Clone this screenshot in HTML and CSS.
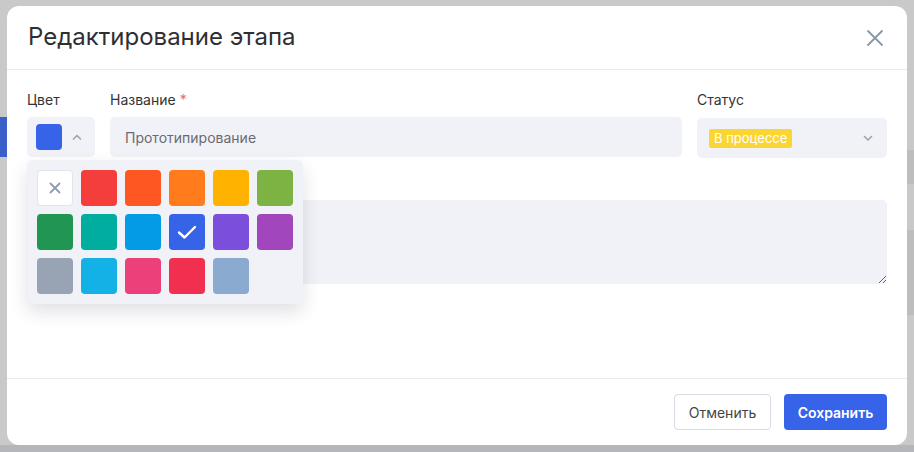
FILE: index.html
```html
<!DOCTYPE html>
<html lang="ru">

<head>
  <meta charset="UTF-8" />
  <meta name="viewport" content="width=device-width, initial-scale=1.0" />
  <title>Редактирование этапа</title>
  <link rel="stylesheet" href="styles.css">
</head>

<body>
  <div class="modal">
    <div class="modal-header">
      <h2>Редактирование этапа</h2>
      <button class="close" aria-label="Закрыть">
        <svg width="18" height="18" viewBox="0 0 18 18"><path d="M2 2 L16 16 M16 2 L2 16" stroke="#8a97a8" stroke-width="1.8" stroke-linecap="round" fill="none"/></svg>
      </button>
    </div>

    <div class="modal-body">
      <div class="row">
        <div class="field field-color">
          <label>Цвет</label>
          <div class="color-btn">
            <span class="color-current"></span>
            <svg width="10" height="6" viewBox="0 0 10 6"><path d="M1.5 5 L5 1.5 L8.5 5" stroke="#9aa4b2" stroke-width="1.6" fill="none" stroke-linecap="round" stroke-linejoin="round"/></svg>
          </div>

          <div class="palette">
            <span class="swatch none">
              <svg width="12" height="12" viewBox="0 0 12 12"><path d="M1.5 1.5 L10.5 10.5 M10.5 1.5 L1.5 10.5" stroke="#8f9bb0" stroke-width="1.8" stroke-linecap="round"/></svg>
            </span>
            <span class="swatch" style="background:#f43e3b"></span>
            <span class="swatch" style="background:#ff5722"></span>
            <span class="swatch" style="background:#ff7b1c"></span>
            <span class="swatch" style="background:#ffb300"></span>
            <span class="swatch" style="background:#7cb342"></span>
            <span class="swatch" style="background:#219653"></span>
            <span class="swatch" style="background:#00ad9f"></span>
            <span class="swatch" style="background:#039be5"></span>
            <span class="swatch selected" style="background:#3763e8">
              <svg width="20" height="16" viewBox="0 0 20 16"><path d="M2 8.5 L7.5 13.5 L18 3" stroke="#fff" stroke-width="2.4" fill="none" stroke-linecap="round" stroke-linejoin="round"/></svg>
            </span>
            <span class="swatch" style="background:#7b4fdc"></span>
            <span class="swatch" style="background:#a246be"></span>
            <span class="swatch" style="background:#98a4b3"></span>
            <span class="swatch" style="background:#13b1e6"></span>
            <span class="swatch" style="background:#ec407a"></span>
            <span class="swatch" style="background:#f0304e"></span>
            <span class="swatch" style="background:#8aabcf"></span>
          </div>
        </div>

        <div class="field field-name">
          <label>Название <span class="req">*</span></label>
          <input type="text" placeholder="Прототипирование">
        </div>

        <div class="field field-status">
          <label>Статус</label>
          <div class="select">
            <span class="badge">В процессе</span>
            <svg width="10" height="6" viewBox="0 0 10 6"><path d="M1.5 1.5 L5 5 L8.5 1.5" stroke="#9aa4b2" stroke-width="1.6" fill="none" stroke-linecap="round" stroke-linejoin="round"/></svg>
          </div>
        </div>
      </div>

      <div class="field field-desc">
        <label>Описание</label>
        <textarea></textarea>
      </div>
    </div>

    <div class="modal-footer">
      <button class="btn btn-cancel">Отменить</button>
      <button class="btn btn-save">Сохранить</button>
    </div>
  </div>
</body>

</html>
```

FILE: styles.css
```css
* {
  box-sizing: border-box;
}

body {
  margin: 0;
  height: 452px;
  overflow: hidden;
  font-family: Inter, "Noto Sans", sans-serif;
  background:
    linear-gradient(#3a5fc8, #3a5fc8) 0 117px / 7px 40px no-repeat,
    linear-gradient(#bdbdbd, #bdbdbd) 907px 150px / 7px 34px no-repeat,
    linear-gradient(#bdbdbd, #bdbdbd) 907px 230px / 7px 85px no-repeat,
    linear-gradient(#b4b6bc, #b4b6bc) 0 445px / 914px 7px no-repeat,
    #c9c9c9;
  padding: 6px 7px;
}

.modal {
  width: 900px;
  height: 439px;
  background: #fff;
  border-radius: 12px;
  display: flex;
  flex-direction: column;
}

.modal-header {
  height: 64px;
  padding: 0 22px 0 21px;
  display: flex;
  align-items: center;
  justify-content: space-between;
  border-bottom: 1px solid #e8e9ee;
}

.modal-header h2 {
  margin: 0;
  font-size: 24px;
  font-weight: 400;
  color: #2f2f33;
  padding-bottom: 2px;
}

.close {
  background: none;
  border: none;
  padding: 0;
  width: 20px;
  height: 20px;
  display: flex;
  align-items: center;
  justify-content: center;
}

.modal-body {
  flex: 1;
  padding: 20px 20px 0;
  display: flex;
  flex-direction: column;
  gap: 15px;
}

.row {
  display: flex;
  gap: 15px;
}

.field {
  display: flex;
  flex-direction: column;
  gap: 7px;
}

.field label {
  font-size: 14px;
  line-height: 20px;
  color: #333;
}

.req {
  color: #f2657a;
}

.field-color {
  width: 68px;
  position: relative;
}

.field-name {
  flex: 1;
}

.field-status {
  width: 190px;
}

.color-btn {
  height: 40px;
  background: #f1f2f7;
  border-radius: 5px;
  display: flex;
  align-items: center;
  padding: 0 13px 0 9px;
  justify-content: space-between;
}

.color-current {
  width: 26px;
  height: 26px;
  border-radius: 4px;
  background: #3763e8;
}

input,
textarea {
  font-family: inherit;
  font-size: 14px;
  border: none;
  outline: none;
  background: #f1f2f7;
  border-radius: 5px;
}

input {
  height: 40px;
  padding: 0 15px;
}

input::placeholder {
  color: #6a6a70;
}

textarea {
  height: 84px;
  resize: vertical;
}

.select {
  height: 40px;
  margin-top: 1px;
  background: #f1f2f7;
  border-radius: 5px;
  display: flex;
  align-items: center;
  justify-content: space-between;
  padding: 0 14px 0 12px;
}

.badge {
  background: #fbd532;
  color: #fff;
  font-size: 13px;
  line-height: 19px;
  padding: 0 5px;
  border-radius: 2px;
}

.palette {
  position: absolute;
  top: 70px;
  left: 0;
  z-index: 5;
  width: 276px;
  padding: 10px;
  display: grid;
  grid-template-columns: repeat(6, 36px);
  gap: 8px;
  background: #f1f2f7;
  border-radius: 6px;
  box-shadow: 0 8px 18px rgba(40, 45, 70, 0.14);
}

.swatch {
  width: 36px;
  height: 36px;
  border-radius: 4px;
  display: flex;
  align-items: center;
  justify-content: center;
}

.swatch.none {
  background: #fff;
  border: 1px solid #e1e4ea;
}

.modal-footer {
  height: 67px;
  border-top: 1px solid #e8e9ee;
  display: flex;
  align-items: center;
  justify-content: flex-end;
  gap: 13px;
  padding: 0 20px;
}

.btn {
  height: 36px;
  font-family: inherit;
  font-size: 14px;
  border-radius: 4px;
  cursor: pointer;
}

.btn-cancel {
  width: 97px;
  background: #fff;
  border: 1px solid #d8dbe3;
  color: #444;
}

.btn-save {
  width: 103px;
  background: #3763e8;
  border: none;
  color: #fff;
  font-weight: 600;
}
```
